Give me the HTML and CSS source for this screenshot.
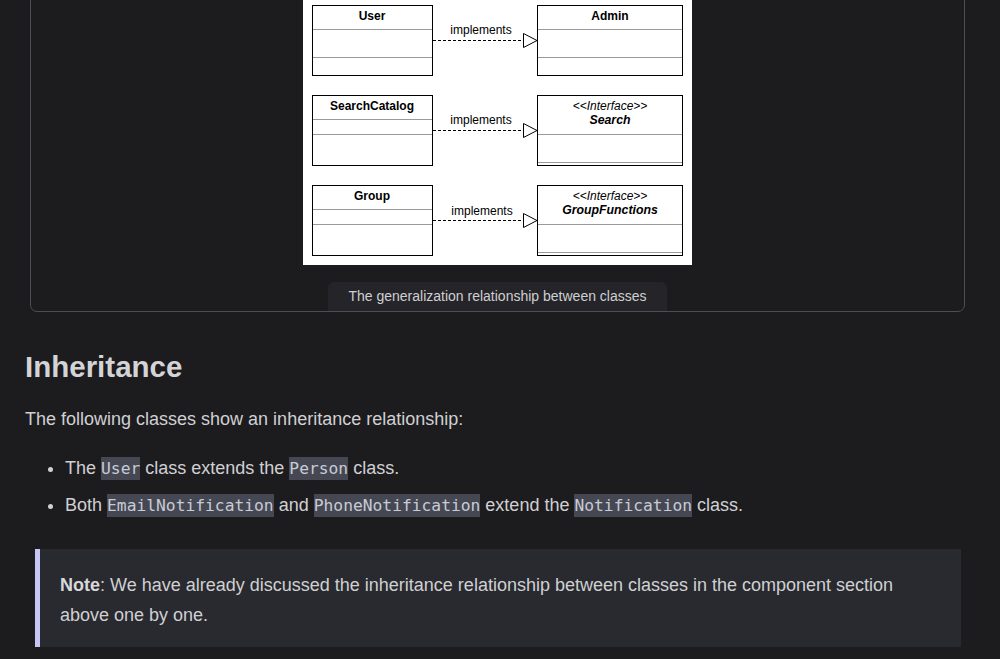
FILE: index.html
```html
<!DOCTYPE html>
<html lang="en">
<head>
    <meta charset="UTF-8">
    <meta name="viewport" content="width=device-width, initial-scale=1.0">
    <title>Class Diagram - Relationships</title>
    <link rel="stylesheet" href="styles.css">
</head>
<body>

<main class="content">
    <figure class="figure-card">
        <svg class="diagram" width="389" height="280" viewBox="303 -15 389 280" xmlns="http://www.w3.org/2000/svg">
            <rect x="303" y="-15" width="389" height="280" fill="#fff"/>
            <g fill="#fff" stroke="#000" stroke-width="1">
                <rect x="312.5" y="5.5" width="120" height="70"/>
                <rect x="537.5" y="5.5" width="145" height="70"/>
                <rect x="312.5" y="95.5" width="120" height="70"/>
                <rect x="537.5" y="95.5" width="145" height="70"/>
                <rect x="312.5" y="185.5" width="120" height="70"/>
                <rect x="537.5" y="185.5" width="145" height="70"/>
            </g>
            <g stroke="#9a9a9a" stroke-width="1">
                <line x1="313" y1="29.5" x2="432" y2="29.5"/>
                <line x1="313" y1="57.5" x2="432" y2="57.5"/>
                <line x1="538" y1="29.5" x2="682" y2="29.5"/>
                <line x1="538" y1="57.5" x2="682" y2="57.5"/>
                <line x1="313" y1="119.5" x2="432" y2="119.5"/>
                <line x1="313" y1="134.5" x2="432" y2="134.5"/>
                <line x1="538" y1="134.5" x2="682" y2="134.5"/>
                <line x1="538" y1="162.5" x2="682" y2="162.5"/>
                <line x1="313" y1="209.5" x2="432" y2="209.5"/>
                <line x1="313" y1="224.5" x2="432" y2="224.5"/>
                <line x1="538" y1="224.5" x2="682" y2="224.5"/>
                <line x1="538" y1="252.5" x2="682" y2="252.5"/>
            </g>
            <g stroke="#000" stroke-width="1" fill="none" stroke-dasharray="3 2">
                <line x1="433" y1="40.5" x2="523" y2="40.5"/>
                <line x1="433" y1="130.5" x2="523" y2="130.5"/>
                <line x1="433" y1="220.5" x2="523" y2="220.5"/>
            </g>
            <g stroke="#000" stroke-width="1" fill="#fff">
                <polygon points="523.5,33.5 537,40.5 523.5,47.5"/>
                <polygon points="523.5,123.5 537,130.5 523.5,137.5"/>
                <polygon points="523.5,213.5 537,220.5 523.5,227.5"/>
            </g>
            <g class="uml-name" text-anchor="middle">
                <text x="372" y="20">User</text>
                <text x="610" y="20">Admin</text>
                <text x="372" y="110">SearchCatalog</text>
                <text x="372" y="200">Group</text>
            </g>
            <g class="uml-stereo" text-anchor="middle">
                <text x="610" y="110">&lt;&lt;Interface&gt;&gt;</text>
                <text x="610" y="200">&lt;&lt;Interface&gt;&gt;</text>
            </g>
            <g class="uml-iface" text-anchor="middle">
                <text x="610" y="124">Search</text>
                <text x="610" y="214">GroupFunctions</text>
            </g>
            <g class="uml-label" text-anchor="middle">
                <text x="481" y="34">implements</text>
                <text x="481" y="124">implements</text>
                <text x="482" y="215">implements</text>
            </g>
        </svg>
        <figcaption class="caption">The generalization relationship between classes</figcaption>
    </figure>

    <h2 class="section-title">Inheritance</h2>
    <p>The following classes show an inheritance relationship:</p>
    <ul class="points">
        <li>The <code>User</code> class extends the <code>Person</code> class.</li>
        <li>Both <code>EmailNotification</code> and <code>PhoneNotification</code> extend the <code>Notification</code> class.</li>
    </ul>

    <blockquote class="note">
        <p><strong>Note</strong>: We have already discussed the inheritance relationship between classes in the component section above one by one.</p>
    </blockquote>
</main>

</body>
</html>
```

FILE: styles.css
```css
body {
    margin: 0;
    background-color: #1c1c1f;
    color: #d0d0d2;
    font-family: "Liberation Sans", Arial, sans-serif;
    font-size: 18px;
    overflow: hidden;
}
.content {
    padding: 0 35px 0 25px;
}
.figure-card {
    margin: -40px 0 0 5px;
    padding-top: 24px;
    border: 1px solid #4d4d52;
    border-radius: 7px;
    display: flex;
    flex-direction: column;
    align-items: center;
}
.diagram {
    display: block;
    margin-bottom: 17px;
}
.uml-name text {
    font-family: "Liberation Sans", Arial, sans-serif;
    font-size: 12px;
    font-weight: bold;
}
.uml-stereo text {
    font-family: "Liberation Sans", Arial, sans-serif;
    font-size: 12px;
    font-style: italic;
}
.uml-iface text {
    font-family: "Liberation Sans", Arial, sans-serif;
    font-size: 12.3px;
    font-style: italic;
    font-weight: bold;
}
.uml-label text {
    font-family: "Liberation Sans", Arial, sans-serif;
    font-size: 12px;
}
.caption {
    background-color: #252529;
    color: #cfcfd2;
    font-size: 14px;
    line-height: 29px;
    padding: 0 20px;
    border-radius: 6px 6px 0 0;
}
.section-title {
    margin: 37px 0 20px;
    font-size: 29.5px;
    line-height: 36px;
    font-weight: bold;
    color: #d4d4d6;
}
p {
    margin: 0;
    line-height: 28px;
}
.points {
    margin: 24px 0 0;
    padding-left: 40px;
}
.points li {
    line-height: 23px;
    margin-bottom: 14px;
}
code {
    font-family: "DejaVu Sans Mono", "Liberation Mono", monospace;
    font-size: 16.3px;
    background-color: #454852;
    color: #c8cbd6;
    padding: 2px 0;
}
.note {
    margin: 32px 4px 0 10px;
    padding: 21px 20px 17px 20px;
    background-color: #282a2f;
    border-left: 5px solid #c6c6f6;
}
.note p {
    line-height: 30px;
}
.note strong {
    color: #d8d8da;
}
```
